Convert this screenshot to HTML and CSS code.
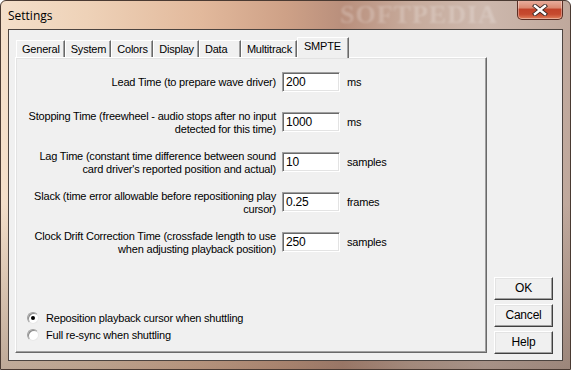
FILE: index.html
```html
<!DOCTYPE html>
<html>
<head>
<meta charset="utf-8">
<link rel="stylesheet" href="styles.css">
</head>
<body>
<div class="window">
  <div class="titlebar">
    <span class="title">Settings</span>
    <span class="wm-title">SOFTPEDIA</span>
    <div class="close">
      <svg width="16" height="12" viewBox="0 0 16 12">
        <path d="M3 2 L13 10 M13 2 L3 10" stroke="#3a2a26" stroke-width="4.2" stroke-linecap="square"/>
        <path d="M3 2 L13 10 M13 2 L3 10" stroke="#fff" stroke-width="2.4" stroke-linecap="square"/>
      </svg>
    </div>
  </div>
  <div class="client">
    <div class="tabctl">
      <div class="tabs">
        <div class="tab">General</div>
        <div class="tab">System</div>
        <div class="tab">Colors</div>
        <div class="tab">Display</div>
        <div class="tab">Data</div>
        <div class="tab">Multitrack</div>
        <div class="tab active">SMPTE</div>
      </div>
      <div class="panel">
        <div class="rows">
          <div class="row">
            <div class="label">Lead Time (to prepare wave driver)</div>
            <div class="field">200</div>
            <div class="unit">ms</div>
          </div>
          <div class="row">
            <div class="label">Stopping Time (freewheel - audio stops after no input<br>detected for this time)</div>
            <div class="field">1000</div>
            <div class="unit">ms</div>
          </div>
          <div class="row">
            <div class="label">Lag Time (constant time difference between sound<br>card driver's reported position and actual)</div>
            <div class="field">10</div>
            <div class="unit">samples</div>
          </div>
          <div class="row">
            <div class="label">Slack (time error allowable before repositioning play<br>cursor)</div>
            <div class="field">0.25</div>
            <div class="unit">frames</div>
          </div>
          <div class="row">
            <div class="label">Clock Drift Correction Time (crossfade length to use<br>when adjusting playback position)</div>
            <div class="field">250</div>
            <div class="unit">samples</div>
          </div>
        </div>
        <div class="radios">
          <div class="radio-item"><span class="radio checked"></span><span>Reposition playback cursor when shuttling</span></div>
          <div class="radio-item"><span class="radio"></span><span>Full re-sync when shuttling</span></div>
        </div>
      </div>
    </div>
    <div class="buttons">
      <div class="btn">OK</div>
      <div class="btn">Cancel</div>
      <div class="btn">Help</div>
    </div>
  </div>
</div>
</body>
</html>
```
FILE: styles.css
```css
html, body {
  margin: 0;
  padding: 0;
  width: 571px;
  height: 370px;
  overflow: hidden;
  background: #fff;
}

.window {
  position: relative;
  box-sizing: border-box;
  width: 571px;
  height: 370px;
  padding: 0 7px 8px 7px;
  display: flex;
  flex-direction: column;
  border: 1px solid #4a3a32;
  border-radius: 6px 6px 0 0;
  background:
    linear-gradient(to bottom, rgba(255,255,255,0) 0%, rgba(255,255,255,0) 55%, rgba(90,70,60,0.35) 100%),
    linear-gradient(to right, #f4dfca 0%, #eed2b8 15%, #e2b99c 35%, #cea187 50%, #b98f7c 60%, #c7ab9c 72%, #cdb8ad 85%, #bfa89c 100%);
  overflow: hidden;
}

.titlebar {
  position: relative;
  height: 28px;
  display: flex;
  align-items: flex-start;
  flex: none;
}

.title {
  font-family: "Open Sans", "Noto Sans", sans-serif;
  font-size: 12px;
  color: #000;
  line-height: 18px;
  padding-top: 6px;
}

.wm-title {
  position: absolute;
  left: 332px;
  top: 0;
  font-family: "Liberation Serif", serif;
  font-weight: bold;
  font-size: 26px;
  line-height: 28px;
  letter-spacing: 1px;
  color: rgba(255,255,255,0.22);
  filter: blur(1px);
}

.close {
  position: relative;
  z-index: 1;
  margin-left: auto;
  margin-top: -1px;
  width: 46px;
  height: 20px;
  box-sizing: border-box;
  border: 1px solid #5b2e24;
  border-top: none;
  border-radius: 0 0 5px 5px;
  background: linear-gradient(to bottom, #eab2a2 0%, #db8a72 40%, #c2432a 50%, #c64a2f 75%, #e0805c 100%);
  box-shadow: inset 0 0 0 1px rgba(255,255,255,0.35);
  display: flex;
  align-items: center;
  justify-content: center;
}

.client {
  flex: 1;
  box-sizing: border-box;
  background: #f0f0f0;
  border: 1px solid #4c4440;
  display: flex;
  padding: 7px 9px 6px 6px;
  font-family: "Liberation Sans", Arial, sans-serif;
  font-size: 11px;
  letter-spacing: -0.2px;
  color: #000;
}

.tabctl {
  width: 474px;
  display: flex;
  flex-direction: column;
  margin-bottom: 1px;
}

.tabs {
  height: 20px;
  display: flex;
  align-items: flex-end;
  padding-left: 1px;
  position: relative;
  z-index: 2;
}

.tab {
  box-sizing: border-box;
  height: 17px;
  min-width: 42px;
  padding: 0 4px 0 5px;
  line-height: 16px;
  border-top: 1px solid #fff;
  border-left: 1px solid #fff;
  border-right: 1px solid #696969;
  box-shadow: inset -1px 0 0 #a0a0a0;
  background: #f0f0f0;
  white-space: nowrap;
}

.tab.active {
  height: 21px;
  margin-bottom: -1px;
  padding-left: 6px;
  padding-right: 7px;
  line-height: 17px;
}

.panel {
  position: relative;
  flex: 1;
  box-sizing: border-box;
  border-top: 1px solid #fff;
  border-left: 1px solid #fff;
  border-right: 1px solid #696969;
  border-bottom: 1px solid #696969;
  box-shadow: inset -1px -1px 0 #a0a0a0, inset 1px 1px 0 #e3e3e3;
  padding: 4px 0 11px 1px;
  display: flex;
  flex-direction: column;
}

.rows {
  display: flex;
  flex-direction: column;
}

.row {
  height: 40px;
  display: flex;
  align-items: center;
}

.label {
  width: 259px;
  text-align: right;
  line-height: 13px;
  white-space: nowrap;
  padding-top: 1px;
}

.field {
  box-sizing: border-box;
  width: 58px;
  height: 20px;
  margin-left: 6px;
  background: #fff;
  border-top: 1px solid #a0a0a0;
  border-left: 1px solid #a0a0a0;
  border-right: 1px solid #fff;
  border-bottom: 1px solid #fff;
  box-shadow: inset 1px 1px 0 #696969, inset -1px -1px 0 #e3e3e3;
  padding-left: 3px;
  line-height: 18px;
  font-size: 12px;
  letter-spacing: -0.2px;
}

.unit {
  margin-left: 7px;
}

.radios {
  margin-top: auto;
  padding-left: 10px;
  display: flex;
  flex-direction: column;
  gap: 4px;
}

.radio-item {
  display: flex;
  align-items: center;
  height: 13px;
}

.radio {
  position: relative;
  box-sizing: border-box;
  width: 12px;
  height: 12px;
  border-radius: 50%;
  background: #fff;
  border: 1px solid;
  border-color: #a0a0a0 #e8e8e8 #e8e8e8 #a0a0a0;
  box-shadow: inset 1px 1px 0 #8a8a8a;
  margin-right: 7px;
}

.radio.checked::after {
  content: "";
  position: absolute;
  left: 3px;
  top: 3px;
  width: 4px;
  height: 4px;
  border-radius: 50%;
  background: #000;
}

.buttons {
  margin-left: 7px;
  display: flex;
  flex-direction: column;
  justify-content: flex-end;
  gap: 4px;
}

.btn {
  box-sizing: border-box;
  width: 59px;
  height: 23px;
  text-align: center;
  line-height: 20px;
  font-size: 12px;
  background: #f0f0f0;
  border-top: 1px solid #fff;
  border-left: 1px solid #fff;
  border-right: 1px solid #404040;
  border-bottom: 1px solid #404040;
  box-shadow: inset -1px -1px 0 #a0a0a0, inset 1px 1px 0 #e3e3e3;
}
```
